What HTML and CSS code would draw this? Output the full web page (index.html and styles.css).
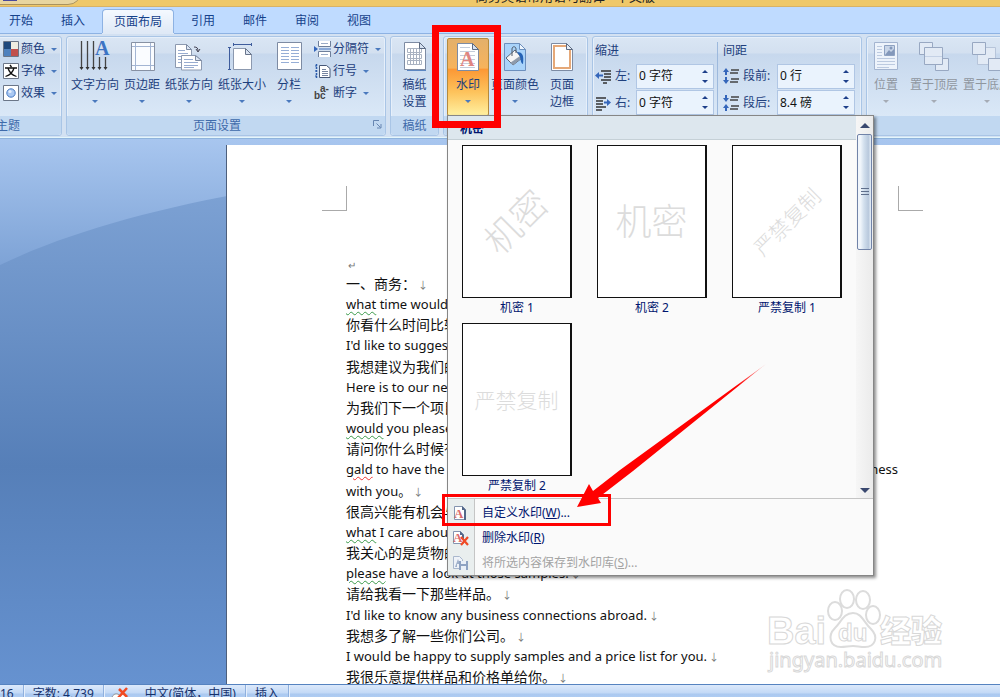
FILE: index.html
```html
<!DOCTYPE html>
<html lang="zh-CN">
<head>
  <meta charset="UTF-8">
  <meta name="viewport" content="width=device-width, initial-scale=1.0">
  <title>页面布局 - 水印</title>
  <link rel="stylesheet" href="styles.css">
</head>
<body>
  <header class="titlebar">
    <div class="quick"><span class="save-icon"></span></div>
    <p class="doc-title">商务英语常用语句翻译 - 中文版</p>
  </header>

  <nav class="tabs">
    <button class="tab">开始</button>
    <button class="tab">插入</button>
    <button class="tab active">页面布局</button>
    <button class="tab">引用</button>
    <button class="tab">邮件</button>
    <button class="tab">审阅</button>
    <button class="tab">视图</button>
  </nav>

  <div class="ribbon">
    <section class="group theme">
      <div class="group-body">
        <div class="small-list">
          <button class="small">
            <svg width="16" height="16" viewBox="0 0 16 16"><path fill="#fff" stroke="#6b7688" d="M.5.5h15v15H.5z"/><path fill="#1f497d" d="M1 1h7v7H1z"/><path fill="#eeece1" d="M8 1h7v7H8z"/><path fill="#4f81bd" d="M1 8h7v7H1z"/><path fill="#c0504d" d="M8 8h7v7H8z"/></svg>
            颜色<i class="caret"></i>
          </button>
          <button class="small">
            <svg width="16" height="16" viewBox="0 0 16 16"><path fill="#fff" stroke="#6b7688" d="M.5.5h15v15H.5z"/><path fill="none" stroke="#111" stroke-width="1.3" d="M7 2l1.500 2M2 5h12M5 5c1 4 4 7 8.500 8.500M11 5c-1 4-4 7-8.500 8.500"/></svg>
            字体<i class="caret"></i>
          </button>
          <button class="small">
            <svg width="16" height="16" viewBox="0 0 16 16"><path fill="#fff" stroke="#6b7688" d="M.5.5h15v15H.5z"/><circle cx="8" cy="8" r="4.200" fill="#a9c8f3" stroke="#4a7cc4"/><circle cx="7" cy="6.500" r="1.600" fill="#e4effd"/></svg>
            效果<i class="caret"></i>
          </button>
        </div>
      </div>
      <h2 class="group-title">主题</h2>
    </section>

    <section class="group setup">
      <div class="group-body">
        <button class="big">
          <svg width="32" height="32" viewBox="0 0 32 32"><path stroke="#444" stroke-width="1.300" d="M2.500 0v28M8.500 0v28M14.500 0v28M20.500 16v12M26.500 16v12"/><path fill="#333" d="M.5 26h4l-2 3zM6.500 26h4l-2 3zM12.500 26h4l-2 3zM18.500 26h4l-2 3zM24.500 26h4l-2 3z"/><text x="16" y="14" class="icon-a" fill="#3c74c4">A</text></svg>
          <span>文字方向</span><i class="caret"></i>
        </button>
        <button class="big">
          <svg width="32" height="32" viewBox="0 0 32 32"><path fill="#fafcff" stroke="#8791a3" d="M5.500 1.500h23v28h-23z"/><path stroke="#a3b5d3" d="M9.500 2v27M24.500 2v27M6 5.500h22M6 24.500h22"/></svg>
          <span>页边距</span><i class="caret"></i>
        </button>
        <button class="big">
          <svg width="32" height="32" viewBox="0 0 32 32"><path fill="#fff" stroke="#8c99af" d="M2.500 3.500h11l5 5v18h-16z"/><path stroke="#98acd0" d="M5 9.500h7M5 12.500h10M5 15.500h4M5 18.500h3M5 21.500h3"/><path fill="#fff" stroke="#8c99af" d="M8.500 14.500h14l6 5v9.500h-20z"/><path fill="#dfe8f5" stroke="#7d8ba3" d="M13.500 3.500v5h5zM22.500 14.500v5h6z"/><path stroke="#98acd0" d="M11 18.500h9M11 21.500h14M11 24.500h14M11 26.500h10"/><path fill="none" stroke="#445" d="M21 6c3 0 4 1 4 4M23 8l2 3 2-3"/></svg>
          <span>纸张方向</span><i class="caret"></i>
        </button>
        <button class="big">
          <svg width="32" height="32" viewBox="0 0 32 32"><path stroke="#3e5c9c" d="M7 3.500h19M7.500 2v3M25.500 2v3M3.500 6v23M2 6.500h3M2 28.500h3"/><path fill="#fff" stroke="#8c99af" d="M7.500 7.500h12l6 6v15h-18z"/><path fill="#dbe4f2" stroke="#68758b" d="M19.500 7.500v6h6z"/></svg>
          <span>纸张大小</span><i class="caret"></i>
        </button>
        <button class="big">
          <svg width="32" height="32" viewBox="0 0 32 32"><path fill="#fff" stroke="#7d8ba3" d="M4.500 1.500h24v27h-24z"/><path stroke="#96aed6" d="M8 6.500h8M8 9.500h8M8 12.500h8M8 15.500h8M8 18.500h8M8 21.500h8M18 6.500h8M18 9.500h8M18 12.500h8M18 15.500h8M18 18.500h8M18 21.500h8"/></svg>
          <span>分栏</span><i class="caret"></i>
        </button>
        <div class="small-list">
          <button class="small">
            <svg width="17" height="16" viewBox="0 0 17 16"><path fill="#fff" stroke="#6e7f9b" d="M4.500 0v5.500h12V0M4.500 16v-5.500h12V16"/><path stroke="#3f70be" d="M5 8h12"/><path fill="#3566ba" d="M0 5l4 3-4 3z"/><path stroke="#9aabc7" d="M7 2.500h7M7 13.500h7"/></svg>
            分隔符<i class="caret"></i>
          </button>
          <button class="small">
            <svg width="17" height="16" viewBox="0 0 17 16"><path fill="#fff" stroke="#465776" d="M5.500 2.500h7l3.500 3v9H5.500z"/><path stroke="#7584a0" d="M8 6.500h4M8 8.500h6M8 10.500h6M8 12.500h6"/><path stroke="#2c5cab" stroke-width="1.500" stroke-dasharray="2 1" d="M2.500 1v14"/><path stroke="#2c5cab" d="M1 3h2M1 8h2M1 13h2"/></svg>
            行号<i class="caret"></i>
          </button>
          <button class="small">
            <svg width="17" height="16" viewBox="0 0 17 16"><text x="0" y="14" class="icon-hyphen">b</text><text x="6" y="7" class="icon-hyphen">a-</text><text x="6" y="14" class="icon-hyphen">c</text></svg>
            断字<i class="caret"></i>
          </button>
        </div>
      </div>
      <h2 class="group-title">页面设置</h2>
      <button class="launcher" aria-label="页面设置"><svg width="9" height="9" viewBox="0 0 9 9"><path fill="none" stroke="#6685b1" d="M.5 6V.5H6M3.500 3.500l4 4M8 4v4H4"/></svg></button>
    </section>

    <section class="group draft">
      <div class="group-body">
        <button class="big">
          <svg width="32" height="32" viewBox="0 0 32 32"><path fill="#5b86c2" d="M25 9h2v21H8v-2h17z"/><path fill="#fff" stroke="#7d8ba3" d="M5.500 1.500h15l6 6v21h-21z"/><path fill="none" stroke="#a9b2c1" d="M8.500 7.500h14v4h-14zM8.500 13.500h14v4h-14zM8.500 19.500h14v4h-14zM11.500 8v15M14.500 8v15M17.500 8v15M20.500 8v15"/><path fill="#d7e2f1" stroke="#5d6b82" d="M20.500 1.500v6h6z"/></svg>
          <span>稿纸<br>设置</span>
        </button>
      </div>
      <h2 class="group-title">稿纸</h2>
    </section>

    <section class="group background">
      <div class="group-body">
        <button class="big pressed">
          <svg width="32" height="32" viewBox="0 0 32 32"><path fill="#fff" stroke="#7d8ba3" d="M5.500 2.500h15l6 6v21h-21z"/><path stroke="#c3ccda" d="M8 6.500h10M8 10.500h15M8 14.500h15M8 18.500h15M8 22.500h15M8 26.500h15"/><path fill="#d7e2f1" stroke="#5d6b82" d="M20.500 2.500v6h6z"/><text x="8" y="25" class="icon-a" fill="#e08580">A</text></svg>
          <span>水印</span><i class="caret"></i>
        </button>
        <button class="big">
          <svg width="32" height="32" viewBox="0 0 32 32"><path fill="#a9d3fa" stroke="#6c8fbd" d="M5.500 2.500h15l6 6v21h-21z"/><path fill="#eff6fd" stroke="#6c8fbd" d="M20.500 2.500v6h6z"/><path fill="#f4f4f4" stroke="#5b6676" d="M7 17l9-8 7 8-9 7z"/><path fill="#8d9aab" d="M14 24l9-7-2-2-10 7z"/><path fill="none" stroke="#4f5b6b" d="M13 15V8c0-3 4-3 4 0v4"/><path fill="#2462b5" d="M18 11c6 0 7 4 6 12-3-1-2-7-4-9z"/></svg>
          <span>页面颜色</span><i class="caret"></i>
        </button>
        <button class="big wide">
          <svg width="32" height="32" viewBox="0 0 32 32"><path fill="#fff" stroke="#7d8ba3" d="M5.500 2.500h15l6 6v21h-21z"/><path fill="none" stroke="#e5a878" stroke-width="2" d="M20 5H8v22h16V9"/><path fill="#e8eef7" stroke="#5d6b82" d="M20.500 2.500v6h6z"/></svg>
          <span>页面<br>边框</span>
        </button>
      </div>
      <h2 class="group-title">页面背景</h2>
    </section>

    <section class="group paragraph">
      <div class="group-body">
        <div class="fields">
          <h3>缩进</h3>
          <div class="field">
            <svg width="17" height="16" viewBox="0 0 17 16"><path stroke="#333" stroke-width="1.700" d="M6 3h10M9 6h7M9 9h7M6 12h10M8 15h4"/><path fill="#3566ba" d="M0 7.500L4 4v2.500h4v2H4V11z"/></svg>
            <label for="indent-left">左:</label>
            <span class="spin"><input id="indent-left" type="text" value="0 字符"><span class="arrows"><button aria-label="增加" class="up"></button><button aria-label="减少" class="down"></button></span></span>
          </div>
          <div class="field">
            <svg width="17" height="16" viewBox="0 0 17 16"><path stroke="#333" stroke-width="1.700" d="M1 3h10M1 6h7M1 9h7M1 12h10M1 15h6"/><path fill="#3566ba" d="M16 7.500L12 4v2.500H9v2h3V11z"/></svg>
            <label for="indent-right">右:</label>
            <span class="spin"><input id="indent-right" type="text" value="0 字符"><span class="arrows"><button aria-label="增加" class="up"></button><button aria-label="减少" class="down"></button></span></span>
          </div>
        </div>
        <div class="fields spacing">
          <h3>间距</h3>
          <div class="field">
            <svg width="17" height="16" viewBox="0 0 17 16"><path stroke="#444" stroke-width="1.500" d="M8 2h8M7 5h8M8 11h8M7 14h8"/><path fill="#3566ba" d="M3 0l3 4H4v3H2V4H0zM3 16l3-4H4V9H2v3H0z"/></svg>
            <label for="space-before">段前:</label>
            <span class="spin"><input id="space-before" type="text" value="0 行"><span class="arrows"><button aria-label="增加" class="up"></button><button aria-label="减少" class="down"></button></span></span>
          </div>
          <div class="field">
            <svg width="17" height="16" viewBox="0 0 17 16"><path stroke="#444" stroke-width="1.500" d="M8 2h8M7 5h8M8 11h8M7 14h8"/><path fill="#3566ba" d="M3 7l3-4H4V0H2v3H0zM3 9l3 4H4v3H2v-3H0z"/></svg>
            <label for="space-after">段后:</label>
            <span class="spin"><input id="space-after" type="text" value="8.4 磅"><span class="arrows"><button aria-label="增加" class="up"></button><button aria-label="减少" class="down"></button></span></span>
          </div>
        </div>
      </div>
      <h2 class="group-title">段落</h2>
    </section>

    <section class="group arrange">
      <div class="group-body">
        <button class="big" disabled>
          <svg width="32" height="32" viewBox="0 0 32 32"><path fill="#edf3fb" stroke="#a3b4d0" d="M4.500 1.500h23v27h-23z"/><path stroke="#bccae0" d="M7 5.500h5M7 8.500h5M7 11.500h5M7 14.500h5M7 17.500h18M7 20.500h18M7 23.500h18M7 26.500h12"/><path fill="#c8d5e8" stroke="#8ea2c2" d="M14.500 4.500h10v10h-10z"/><path fill="#8398bb" d="M15 14l4-5 2 2 3-3v6z"/><circle cx="21" cy="7" r="1.500" fill="#8398bb"/></svg>
          <span>位置</span><i class="caret"></i>
        </button>
        <button class="big" disabled>
          <svg width="32" height="32" viewBox="0 0 32 32"><g fill="#e2eaf5" stroke="#98a8c2"><path d="M1.500 1.500h13v12h-13zM17.500 17.500h13v12h-13z"/><path d="M6.500 6.500h18v17h-18z"/></g><path stroke="#c4d1e5" d="M7 15.500h17"/></svg>
          <span>置于顶层</span><i class="caret"></i>
        </button>
        <button class="big" disabled>
          <svg width="32" height="32" viewBox="0 0 32 32"><g fill="#e2eaf5" stroke="#98a8c2"><path stroke="#b7c5da" d="M6.500 6.500h18v17h-18z"/><path d="M1.500 1.500h13v12h-13zM17.500 17.500h13v12h-13z"/></g></svg>
          <span>置于底层</span><i class="caret"></i>
        </button>
      </div>
      <h2 class="group-title"></h2>
    </section>
  </div>

  <main class="workspace">
    <svg class="swoosh" viewBox="0 0 1000 545" preserveAspectRatio="none">
      <defs>
        <linearGradient id="sheen" x1="0" y1="0" x2="0" y2="1"><stop offset="0" stop-color="#a8c6ef"/><stop offset="1" stop-color="#7ea3d6"/></linearGradient>
      </defs>
      <path fill="url(#sheen)" d="M0 0h1000v10C600 0 200 30 0 126z"/>
    </svg>
    <article class="page">
      <div class="marks"><span class="mark left"></span><span class="mark right"></span></div>
      <div class="text">
        <p class="zh"><span class="sign">↵</span></p>
        <p class="zh">一、商务：<span class="sign">↓</span></p>
        <p><u>what</u> time would be convenient for you?</p>
        <p class="zh">你看什么时间比较方便？</p>
        <p>I'd like to suggest a toast to our cooperation.</p>
        <p class="zh">我想建议为我们的合作干杯。</p>
        <p>Here is to our next project!</p>
        <p class="zh">为我们下一个项目干杯！</p>
        <p><u>would</u> you please tell me when you are free?</p>
        <p class="zh">请问你什么时候有空？</p>
        <p class="spread"><span><u class="typo">gald</u> to have the opportunity</span><span>of doing business</span></p>
        <p>with you。<span class="sign">↓</span></p>
        <p class="zh">很高兴能有机会与您合作。</p>
        <p><u>what</u> I care about is the quality of the goods.</p>
        <p class="zh">我关心的是货物的质量。</p>
        <p><u>please</u> have a look at those samples.<span class="sign">↓</span></p>
        <p class="zh">请给我看一下那些样品。<span class="sign">↓</span></p>
        <p>I'd like to know any business connections abroad.<span class="sign">↓</span></p>
        <p class="zh">我想多了解一些你们公司。<span class="sign">↓</span></p>
        <p>I would be happy to supply samples and a price list for you.<span class="sign">↓</span></p>
        <p class="zh">我很乐意提供样品和价格单给你。<span class="sign">↓</span></p>
      </div>
    </article>
    <svg class="brand" width="190" height="100" viewBox="0 0 190 100">
      <g fill="#fff" stroke="#dcdcdc" stroke-width="2">
        <ellipse cx="73" cy="27" rx="7" ry="9"/>
        <ellipse cx="85" cy="15" rx="7" ry="9"/>
        <ellipse cx="101" cy="16" rx="7" ry="9"/>
        <ellipse cx="111" cy="31" rx="7" ry="9"/>
        <path d="M91 29c9 0 11 10 18 16 8 8 4 18-6 18-5 0-8-1-12-1s-8 1-12 1c-11 0-14-11-6-19 6-6 9-15 18-15z"/>
      </g>
      <text class="brand-name" x="5" y="60">Bai</text>
      <text class="brand-du" x="76" y="57">du</text>
      <text class="brand-cn" x="118" y="58">经验</text>
      <text class="brand-url" x="7" y="83">jingyan.baidu.com</text>
    </svg>
  </main>

  <footer class="status">
    <span class="pages">16</span>
    <span>字数: 4,739</span>
    <span class="proof"><svg width="18" height="16" viewBox="0 0 18 16"><path fill="#fff" stroke="#8a8f99" d="M1 10c2-4 6-4 8-1 2-3 5-3 7 0v4H1z"/><path stroke="#f04a24" stroke-width="2.500" d="M8 2l8 8M16 1L7 11"/></svg></span>
    <span>中文(简体，中国)</span>
    <span>插入</span>
  </footer>

  <div class="popup">
    <div class="gallery">
      <div class="gallery-main">
        <h2>机密</h2>
        <div class="thumbs">
          <button class="thumb"><span class="sheet"><b class="wm large diagonal">机密</b></span>机密 1</button>
          <button class="thumb"><span class="sheet"><b class="wm large">机密</b></span>机密 2</button>
          <button class="thumb"><span class="sheet"><b class="wm diagonal">严禁复制</b></span>严禁复制 1</button>
          <button class="thumb"><span class="sheet"><b class="wm">严禁复制</b></span>严禁复制 2</button>
        </div>
      </div>
      <div class="scroll">
        <button class="up" aria-label="向上滚动"></button>
        <div class="track"><div class="grip"></div></div>
        <button class="down" aria-label="向下滚动"></button>
      </div>
    </div>
    <div class="menu">
      <button>
        <span class="menu-icon"><svg width="16" height="16" viewBox="0 0 16 16"><path fill="#fff" stroke="#8494b0" d="M2.500 1.500h8l3 3v10h-11z"/><path fill="#536789" d="M10 1l4 4v10h-2V5h-2z"/><text x="2" y="13" class="icon-sm">A</text></svg></span>
        <span>自定义水印(<u>W</u>)...</span>
      </button>
      <button>
        <span class="menu-icon"><svg width="18" height="16" viewBox="0 0 18 16"><path fill="#fff" stroke="#8494b0" d="M1.500 1.500h7l3 3v9h-10z"/><path fill="#536789" d="M8 1l4 4v4h-2V5H8z"/><text x="1" y="12" class="icon-sm">A</text><path stroke="#f04a24" stroke-width="2.200" d="M9 7l7 8M16 7l-7 8"/></svg></span>
        <span>删除水印(<u>R</u>)</span>
      </button>
      <button disabled>
        <span class="menu-icon"><svg width="18" height="16" viewBox="0 0 18 16"><path fill="#eef2f8" stroke="#a9b7cd" d="M1.500 1.500h6l3 3v9h-9z"/><path fill="#9fb0ca" d="M3 12l3-8 3 8H7V9H5v3z"/><path fill="#8ea2c2" d="M7 6h9v9H7z"/><path fill="#e9eff7" d="M9 6h5v3H9zM9 11h5v4H9z"/></svg></span>
        <span>将所选内容保存到水印库(<u>S</u>)...</span>
      </button>
    </div>
  </div>

  <!-- callouts -->
  <div class="callout callout-button"></div>
  <div class="callout callout-item"></div>
  <svg class="arrow" width="192" height="146" viewBox="0 0 192 146">
    <defs><linearGradient id="fade" x1="1" y1="0" x2="0" y2="1"><stop offset="0" stop-color="#f00" stop-opacity=".3"/><stop offset=".15" stop-color="#f00"/></linearGradient></defs>
    <path fill="url(#fade)" d="M2 144L14 121l4 7 27-21L191 1 58 108l-35 27 3 5z"/>
  </svg>
</body>
</html>
```
FILE: styles.css
```css
* { margin: 0; padding: 0; box-sizing: border-box; }
body { display: flex; flex-direction: column; height: 100vh; overflow: hidden; position: relative; font-family: "Noto Sans", "Noto Sans CJK SC", sans-serif; font-size: 12px; line-height: 16px; color: #1e3f7d; background: #bfdbff; }
button { border: none; background: none; font: inherit; color: inherit; cursor: pointer; }
h2, h3 { font-size: 12px; font-weight: normal; }
svg { display: block; flex: none; }

/* title bar */
.titlebar { height: 7px; flex: none; background: #efc869; border-bottom: 1px solid #d8b266; overflow: hidden; display: flex; justify-content: center; position: relative; }
.quick { position: absolute; left: -10px; top: -16px; width: 92px; height: 21px; border: 1px solid #a9925f; border-radius: 0 0 14px 0; background: #e8d5a0; }
.save-icon { position: absolute; left: 12px; bottom: 3px; width: 14px; height: 14px; background: #4b4a9b; }
.doc-title { font-size: 13px; color: #222; margin-top: -12px; margin-left: 130px; white-space: nowrap; }

/* tabs */
.tabs { display: flex; flex: none; gap: 6px; height: 27px; padding-top: 2px; margin-left: -2px; border-bottom: 1px solid #8db2e3; background: #bfdbff; }
.tab { padding: 0 11px; color: #15428b; }
.tab.active { border: 1px solid #8db2e3; border-bottom: none; border-radius: 4px 4px 0 0; background: linear-gradient(#f4f9ff, #dfe9f6); box-shadow: 0 1px 0 #dfe9f6; }

/* ribbon */
.ribbon { display: flex; flex: none; gap: 4px; height: 105px; padding: 2px 0; background: #d3e1f2; border-bottom: 1px solid #8fb3dc; box-shadow: inset 0 -1px 0 #e3f6fc; overflow: hidden; }
.group { display: flex; flex-direction: column; flex: none; position: relative; border: 1px solid #a9c5e6; border-radius: 3px; background: linear-gradient(#dae6f4 0, #d3e0f0 16px, #c7d8ed 17px, #dae8f7 80px); box-shadow: inset 0 0 0 1px #e6effa; }
.group-body { display: flex; height: 79px; padding: 1px 4px 0; gap: 5px; }
.group-title { flex: 1; text-align: center; line-height: 19px; background: #c1d8f1; color: #3e6aaa; border-radius: 0 0 3px 3px; }
.theme { width: 108px; margin-left: -46px; }
.theme .group-body { justify-content: flex-end; }
.setup { width: 320px; }
.setup .group-title { padding-right: 18px; }
.draft { width: 49px; }
.background { width: 145px; }
.paragraph { width: 270px; }
.arrange { width: 190px; }
.draft .group-body { justify-content: center; }
.background .group-body { gap: 2px; padding-left: 3px; }
.arrange .group-body { padding-left: 0; }

.big { display: flex; flex-direction: column; align-items: center; min-width: 36px; padding-top: 3px; white-space: nowrap; line-height: 17px; }
.big span { margin-top: 3px; }
.big .caret { margin-top: 7px; }
.pressed { width: 42px; border: 1px solid #b58a3d; border-radius: 2px; padding-top: 2px; background: linear-gradient(#e3b06b, #f7b35b 38%, #fc9835 40%, #fdc35c 70%, #fff0a0); }
.wide { min-width: 42px; }
.caret { width: 0; height: 0; border: 3px solid transparent; border-top-color: #4a79bd; border-bottom: none; }
.big:disabled { color: #8f969f; min-width: 38px; }
.big:disabled .caret { border-top-color: #a5abb5; }
.small-list { display: flex; flex-direction: column; padding-left: 2px; }
.small { display: flex; align-items: center; gap: 2px; height: 22px; white-space: nowrap; }
.small .caret { margin-left: 4px; }
.launcher { position: absolute; right: 3px; bottom: 6px; }

.icon-a { font: bold 20px "Liberation Serif", serif; }
.icon-sm { font: bold 13px "Liberation Serif", serif; fill: #dc6b6b; }
.icon-hyphen { font: bold 10px "Liberation Sans", sans-serif; fill: #444; }

.paragraph .group-body { padding: 5px 6px 0 2px; gap: 3px; }
.fields { flex: 1; display: flex; flex-direction: column; }
.fields h3 { line-height: 18px; margin-bottom: 3px; }
.spacing { border-left: 1px solid #9db9dd; padding-left: 5px; flex: none; width: 138px; }
.field { display: flex; align-items: center; gap: 3px; height: 27px; white-space: nowrap; }
.field label { flex: 1; }
.spin { display: flex; width: 78px; height: 25px; border: 1px solid #b0c6e4; background: #eaf3fd; }
.spin input { width: 62px; border: none; background: none; font: inherit; color: #111; padding-left: 2px; }
.arrows { display: flex; flex-direction: column; justify-content: center; gap: 7px; margin-left: 3px; }
.up, .down { width: 0; height: 0; border: 3px solid transparent; }
.up { border-top: none; border-bottom-color: #1d3f8a; }
.down { border-bottom: none; border-top-color: #1d3f8a; }

/* document */
.workspace { flex: 1; min-height: 0; position: relative; overflow: hidden; padding: 6px 0 0 227px; background: linear-gradient(#84a8d9, #567fb8 60%, #6692d0); }
.swoosh { position: absolute; left: 0; top: 0; width: 100%; height: 100%; }
.page { position: relative; height: 100%; background: #fff; box-shadow: -1px 0 0 #4d5f7c; padding: 41px 0 0 95px; color: #111; }
.marks { display: flex; justify-content: space-between; width: 601px; }
.mark { width: 25px; height: 25px; border-bottom: 1px solid #aaa; }
.mark.left { border-right: 1px solid #aaa; }
.mark.right { border-left: 1px solid #aaa; }
.text { width: 552px; margin: 43px 0 0 24px; font-size: 13px; white-space: nowrap; }
.text p { height: 21px; line-height: 21px; }
.text .zh { height: 20px; line-height: 20px; font-size: 14px; }
.text p:nth-child(6n) { margin-top: 1px; }
.text u { text-decoration: underline wavy #3a9a4a 1px; text-underline-offset: 2px; }
.text u.typo { text-decoration-color: #e33; }
.text .spread { display: flex; justify-content: space-between; }
.sign { color: #777; font-size: 10px; margin-left: 2px; }

.brand { position: absolute; left: 762px; bottom: 0; }
.brand text { fill: #fff; stroke: #d8d8d8; stroke-width: 1px; }
.brand .brand-name { font: bold 38px "Liberation Sans", sans-serif; }
.brand .brand-du { font: bold 24px "Liberation Sans", sans-serif; }
.brand .brand-cn { font: 900 31px "Noto Sans CJK SC", sans-serif; }
.brand .brand-url { font: 20px "Noto Sans", sans-serif; }

/* status bar */
.status { display: flex; flex: none; height: 22px; margin-bottom: -9px; border-top: 1px solid #5683c0; background: linear-gradient(#dce9fb, #c3d9f6 8px, #abc9f0 9px, #b9d3f5); color: #15316b; line-height: 18px; white-space: nowrap; }
.status span { padding: 0 9px; border-right: 1px solid #8fb0de; box-shadow: 1px 0 0 #e5effc; }
.status .pages { padding-left: 0; }
.status .proof { padding: 2px 7px 0; border: none; box-shadow: none; }

/* watermark gallery */
.popup { position: absolute; left: 447px; top: 115px; width: 427px; background: #fafafa; border: 1px solid #868686; box-shadow: 2px 2px 3px rgba(0,0,0,0.45); color: #00156e; }
.gallery { display: flex; height: 383px; border-bottom: 1px solid #c5c5c5; }
.gallery-main { flex: 1; }
.gallery-main h2 { height: 24px; line-height: 26px; padding-left: 12px; font-weight: bold; background: #dde7ee; border-bottom: 1px solid #c5d0d6; }
.thumbs { display: grid; grid-template-columns: repeat(3, 110px); column-gap: 25px; row-gap: 5px; padding: 5px 0 0 14px; }
.thumb { display: flex; flex-direction: column; align-items: center; line-height: 20px; }
.sheet { display: flex; align-items: center; justify-content: center; width: 110px; height: 153px; border: 1px solid #111; border-right-width: 2px; background: #fff; }
.wm { font-size: 21px; line-height: 30px; font-weight: 300; color: #dcdcdc; white-space: nowrap; }
.wm.large { font-size: 36px; }
.wm.diagonal { transform: rotate(-45deg); }
.scroll { display: flex; flex-direction: column; align-items: center; width: 17px; padding: 7px 0 5px; background: linear-gradient(90deg, #f6f6f6, #ebebeb); }
.scroll .up, .scroll .down { border-left-width: 5px; border-right-width: 5px; }
.scroll .up { border-bottom: 5px solid #39486f; }
.scroll .down { border-top: 5px solid #39486f; }
.track { flex: 1; padding-top: 6px; }
.grip { width: 15px; height: 116px; border: 1px solid #7183a8; border-radius: 2px; background: repeating-linear-gradient(#5f6f8c 0 1px, transparent 1px 3px) center / 8px 8px no-repeat, linear-gradient(90deg, #f0f5fb 20%, #d3e0ee 45%, #b9c9dd 80%, #e5edf6); }
.menu { padding-bottom: 1px; background: linear-gradient(90deg, #e9eeee 26px, #c5c5c5 26px, #c5c5c5 27px, #fafafa 27px); }
.menu button { display: flex; align-items: center; width: 100%; height: 25px; padding-top: 2px; }
.menu button:disabled { color: #a3a3a3; }
.menu-icon { display: flex; width: 34px; padding-left: 4px; }

/* callouts */
.callout { position: absolute; border: 7px solid #f00; }
.callout-button { left: 432px; top: 25px; width: 69px; height: 103px; }
.callout-item { left: 442px; top: 494px; width: 169px; height: 32px; border-width: 3px; }
.arrow { position: absolute; left: 575px; top: 363px; }
```
